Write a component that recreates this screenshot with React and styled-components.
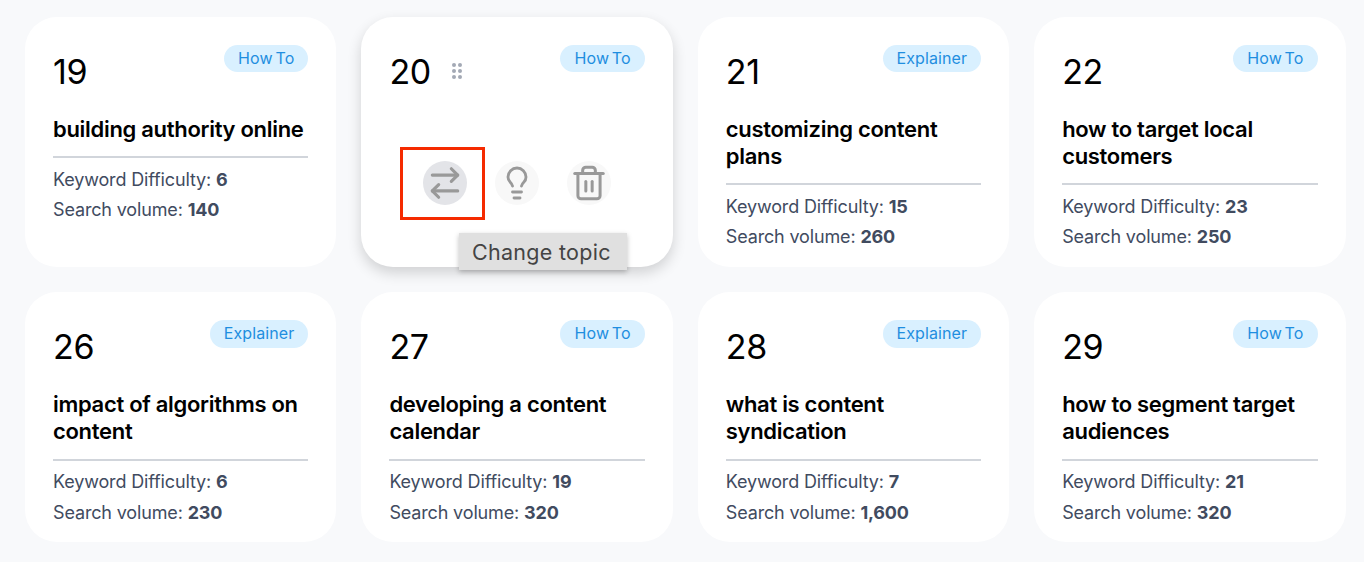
import React from "react";
import styled, { createGlobalStyle } from "styled-components";
import { ArrowRightLeft, Lightbulb, Trash2 } from "lucide-react";

const Global = createGlobalStyle`
  html, body { margin: 0; padding: 0; background: #f8f9fb; }
  body { font-family: Inter, "Liberation Sans", sans-serif; width: 1364px; height: 562px; overflow: hidden; }
`;

const Grid = styled.main`
  display: grid;
  grid-template-columns: repeat(4, 1fr);
  grid-auto-rows: 250px;
  gap: 25.4px 25px;
  width: 1320.5px;
  padding: 17px 18.5px 0 25px;
`;

const Card = styled.article`
  position: relative;
  background: #fff;
  border-radius: 32px;
  padding: 28px 28px 0;
  box-shadow: ${(p) => (p.$active ? "0 6px 14px rgba(0,0,0,.16)" : "none")};
`;

const Head = styled.header`
  display: flex;
  justify-content: space-between;
  align-items: flex-start;
  height: 71px;
`;

const NumberWrap = styled.div`
  display: flex;
  align-items: center;
  gap: 21px;
  padding-top: 7px;
`;

const Num = styled.span`
  font-size: 34px;
  line-height: 40px;
  font-weight: 400;
  color: #000;
  letter-spacing: -0.3px;
`;

const Grip = styled.svg`
  display: block;
  width: 10px;
  height: 16px;
  margin-top: -2px;
  fill: #a3a9b5;
`;

const Badge = styled.span`
  height: 27.4px;
  padding: 0 14px;
  border-radius: 14px;
  background: #d9f0ff;
  color: #1f8ee0;
  font-size: 16px;
  line-height: 27.7px;
  letter-spacing: 0.1px;
  word-spacing: -1.8px;
`;

const Title = styled.h3`
  margin: 0;
  font-size: 22px;
  line-height: 27px;
  font-weight: 600;
  color: #000;
  letter-spacing: -0.3px;
  padding-bottom: 13.3px;
  border-bottom: 2px solid #d1d5db;
`;

const Stats = styled.div`
  padding-top: 6.4px;
`;

const Stat = styled.p`
  margin: 0;
  font-size: 18px;
  line-height: 30.7px;
  color: #414b5f;
  letter-spacing: -0.15px;
  b { font-weight: 700; }
`;

const Actions = styled.div`
  position: relative;
  display: flex;
  gap: 28px;
  padding: 45px 0 0 34px;
`;

const IconBtn = styled.button`
  display: flex;
  align-items: center;
  justify-content: center;
  width: 44px;
  height: 44px;
  padding: 0;
  border: none;
  border-radius: 50%;
  background: ${(p) => (p.$on ? "#e3e4e8" : "#f8f8f8")};
  color: #999;
`;

const Highlight = styled.span`
  position: absolute;
  left: 39px;
  top: 130px;
  width: 85px;
  height: 73px;
  box-sizing: border-box;
  border: 3px solid #f52a00;
  pointer-events: none;
`;

const Tooltip = styled.span`
  position: absolute;
  left: 98px;
  top: 216px;
  width: 168px;
  height: 37px;
  box-sizing: border-box;
  padding: 1px 4px 0 0;
  text-align: center;
  background: #e0e0e0;
  color: #444;
  font-size: 21.5px;
  line-height: 37px;
  letter-spacing: 0.3px;
  box-shadow: 0 2px 5px rgba(0,0,0,.25);
`;

const data = [
  [19, "How To", "building authority online", "6", "140"],
  [20, "How To"],
  [21, "Explainer", "customizing content plans", "15", "260"],
  [22, "How To", "how to target local customers", "23", "250"],
  [26, "Explainer", "impact of algorithms on content", "6", "230"],
  [27, "How To", "developing a content calendar", "19", "320"],
  [28, "Explainer", "what is content syndication", "7", "1,600"],
  [29, "How To", "how to segment target audiences", "21", "320"],
];

const GripIcon = () => (
  <Grip viewBox="0 0 10 16" aria-hidden="true">
    {[2, 8].flatMap((x) =>
      [2, 8, 14].map((y) => <circle key={`${x}-${y}`} cx={x} cy={y} r="2" />)
    )}
  </Grip>
);

export default function App() {
  return (
    <>
      <Global />
      <Grid>
        {data.map(([n, kind, title, kd, sv]) => {
          const active = !title;
          return (
            <Card key={n} $active={active}>
              <Head>
                <NumberWrap>
                  <Num>{n}</Num>
                  {active && <GripIcon />}
                </NumberWrap>
                <Badge>{kind}</Badge>
              </Head>
              {active ? (
                <>
                  <Actions>
                    <IconBtn $on aria-label="Change topic"><ArrowRightLeft size={38} strokeWidth={2} /></IconBtn>
                    <IconBtn aria-label="Idea"><Lightbulb size={36} strokeWidth={1.9} /></IconBtn>
                    <IconBtn aria-label="Delete"><Trash2 size={38} strokeWidth={1.9} /></IconBtn>
                  </Actions>
                  <Highlight />
                  <Tooltip>Change topic</Tooltip>
                </>
              ) : (
                <>
                  <Title>{title}</Title>
                  <Stats>
                    <Stat>Keyword Difficulty: <b>{kd}</b></Stat>
                    <Stat>Search volume: <b>{sv}</b></Stat>
                  </Stats>
                </>
              )}
            </Card>
          );
        })}
      </Grid>
    </>
  );
}
